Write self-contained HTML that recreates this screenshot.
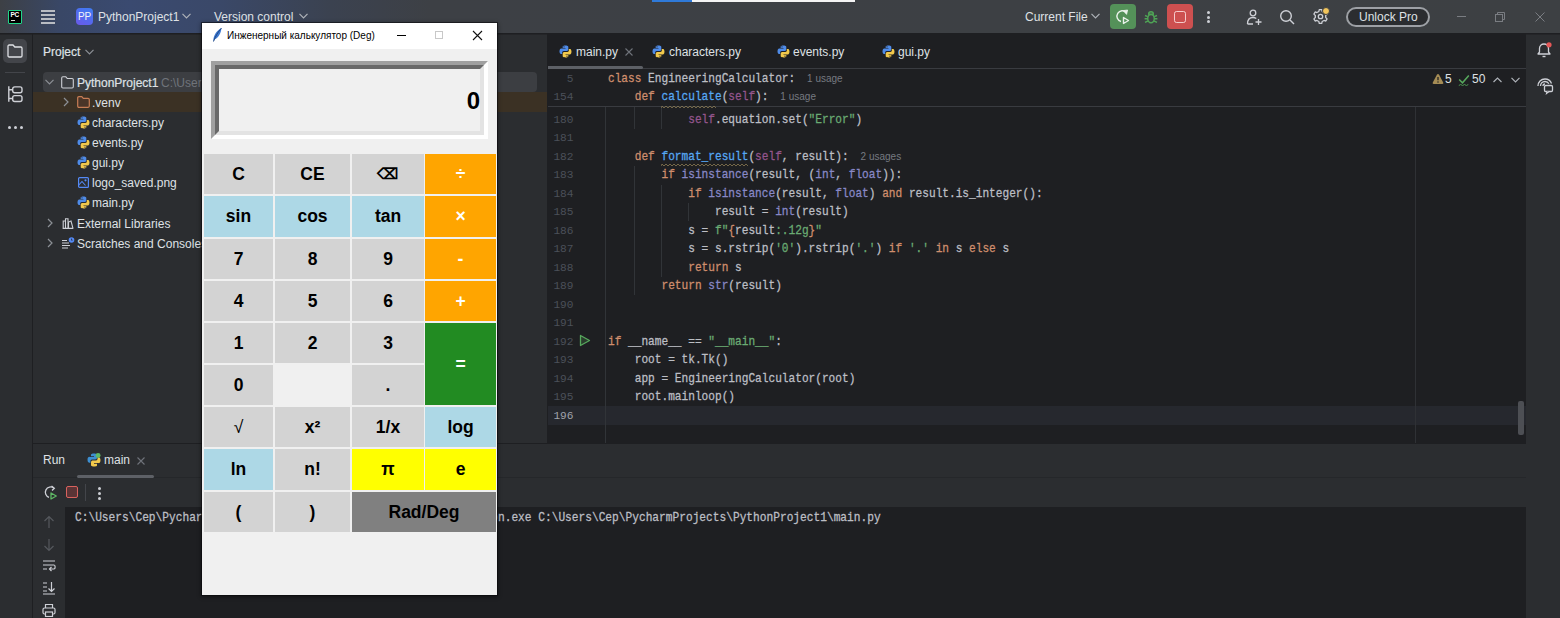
<!DOCTYPE html>
<html><head><meta charset="utf-8">
<style>
*{margin:0;padding:0;box-sizing:border-box}
html,body{width:1560px;height:618px;overflow:hidden;background:#1E1F22;font-family:"Liberation Sans",sans-serif;position:relative}
.a{position:absolute}
.t{position:absolute;white-space:nowrap;font-size:12px;line-height:14px}
.mono{font-family:"Liberation Mono",monospace}
/* title bar */
#top{left:0;top:0;width:1560px;height:33px;background:linear-gradient(90deg,#3d4045 0px,#394766 60px,#3a4a70 130px,#3a4868 220px,#3b4250 330px,#3d4045 430px,#3d4043 1560px)}
#topline{left:0;top:33px;width:1560px;height:1px;background:#1e1f22}
#lstrip{left:0;top:34px;width:32px;height:584px;background:#2B2D30;border-top:1px solid #242528}
#lstripb{left:32px;top:34px;width:1px;height:584px;background:#1E1F22}
#proj{left:33px;top:34px;width:514px;height:409px;background:#2B2D30;border-top:1px solid #242528}
#projb{left:547px;top:34px;width:1px;height:409px;background:#1E1F22}
#edtabs{left:548px;top:34px;width:978px;height:34px;background:#1E1F22}
#edtabb{left:548px;top:68px;width:978px;height:1px;background:#2B2D30}
#editor{left:548px;top:69px;width:978px;height:374px;background:#1E1F22}
#rstrip{left:1526px;top:34px;width:34px;height:584px;background:#2B2D30;border-top:1px solid #242528}
#rstripb{display:none}
#botb{left:33px;top:443px;width:1493px;height:1px;background:#1E1F22}
#runhdr{left:33px;top:444px;width:1493px;height:63px;background:#2B2D30}
#console{left:65px;top:507px;width:1461px;height:111px;background:#1E1F22}
.code{position:absolute;left:608px;font-family:"Liberation Mono",monospace;font-size:11.15px;line-height:18.5px;height:18.5px;color:#BCBEC4;white-space:pre;-webkit-text-stroke:0.25px currentColor;transform:scaleY(1.12);transform-origin:0 55%}
.code .hint{-webkit-text-stroke:0}
.ln{position:absolute;left:548px;width:25.5px;text-align:right;font-family:"Liberation Mono",monospace;font-size:11.15px;line-height:18.5px;color:#4B5059;white-space:pre}
.k{color:#CF8E6D}.f{color:#56A8F5}.s{color:#94558D}.g{color:#6AAB73}.b{color:#8888C6}
.btn{position:absolute;text-align:center;font-family:"Liberation Sans",sans-serif;font-weight:bold;font-size:17.5px;white-space:nowrap}
.hint{font-family:"Liberation Sans",sans-serif;font-size:10px;color:#767A81;margin-left:-1.5px}
</style></head>
<body>
<div id="top" class="a"></div>
<div id="lstrip" class="a"></div>
<div id="lstripb" class="a"></div>
<div id="proj" class="a"></div>
<div id="projb" class="a"></div>
<div id="edtabs" class="a"></div>
<div id="edtabb" class="a"></div>
<div id="editor" class="a"></div>
<div id="rstrip" class="a"></div>
<div id="rstripb" class="a"></div>
<div id="botb" class="a"></div>
<div id="runhdr" class="a"></div>
<div id="console" class="a"></div>
<div id="topline" class="a"></div>



<!-- LEFT STRIP -->
<div class="a" style="left:3px;top:39px;width:24px;height:24px;border-radius:5px;background:#43454A"></div>
<svg class="a" style="left:7px;top:44px" width="16" height="14" viewBox="0 0 16 14"><path d="M1 2.2 C1 1.5 1.5 1 2.2 1 H6 L7.8 3 H13.8 C14.5 3 15 3.5 15 4.2 V11.8 C15 12.5 14.5 13 13.8 13 H2.2 C1.5 13 1 12.5 1 11.8 Z" fill="none" stroke="#DFE1E5" stroke-width="1.3"/></svg>
<div class="a" style="left:5px;top:72px;width:20px;height:1px;background:#43454A"></div>
<svg class="a" style="left:7px;top:85px" width="17" height="18" viewBox="0 0 17 18"><path d="M1.8 1.3 V16.8 M1.8 4.8 H5.2 M1.8 13.5 H5.2" fill="none" stroke="#CED0D6" stroke-width="1.4"/><rect x="5.7" y="1.9" width="9.3" height="5.9" rx="2" fill="none" stroke="#CED0D6" stroke-width="1.4"/><rect x="5.7" y="10.6" width="9.3" height="5.9" rx="2" fill="none" stroke="#CED0D6" stroke-width="1.4"/></svg>
<div class="a" style="left:8px;top:126px;width:3px;height:3px;border-radius:50%;background:#CED0D6"></div>
<div class="a" style="left:14px;top:126px;width:3px;height:3px;border-radius:50%;background:#CED0D6"></div>
<div class="a" style="left:20px;top:126px;width:3px;height:3px;border-radius:50%;background:#CED0D6"></div>

<!-- PROJECT PANEL -->
<div class="t" style="left:43px;top:45px;color:#DFE1E5;-webkit-text-stroke:0.2px #DFE1E5">Project</div>
<svg class="a" style="left:85px;top:49px" width="9" height="6"><path d="M0.5 0.8 L4.5 4.8 L8.5 0.8" fill="none" stroke="#8C9096" stroke-width="1.2"/></svg>
<div class="a" style="left:43px;top:72px;width:494px;height:20px;border-radius:4px;background:#3C3E42"></div>
<div class="a" style="left:33px;top:92px;width:514px;height:20px;background:#3B3124"></div>
<svg class="a" style="left:45px;top:79px" width="9" height="6"><path d="M0.5 0.8 L4.5 4.8 L8.5 0.8" fill="none" stroke="#8C9096" stroke-width="1.2"/></svg>
<svg class="a" style="left:61px;top:76px" width="13" height="13" viewBox="0 0 13 13"><path d="M0.7 2 C0.7 1.3 1.2 0.8 1.9 0.8 H4.8 L6.3 2.5 H11.1 C11.8 2.5 12.3 3 12.3 3.7 V10.8 C12.3 11.5 11.8 12 11.1 12 H1.9 C1.2 12 0.7 11.5 0.7 10.8 Z" fill="none" stroke="#CED0D6" stroke-width="1.1"/></svg>
<div class="t" style="left:77px;top:76px;color:#DFE1E5;-webkit-text-stroke:0.2px #DFE1E5">PythonProject1</div>
<div class="t" style="left:161px;top:76px;color:#6F737A">C:\Users\Cep\PycharmProjects\PythonProject1</div>
<svg class="a" style="left:63px;top:97px" width="6" height="10" viewBox="0 0 6 10"><path d="M1 1 L5 5 L1 9" fill="none" stroke="#8C9096" stroke-width="1.2"/></svg>
<svg class="a" style="left:77px;top:96px" width="13" height="12" viewBox="0 0 13 12"><path d="M0.7 1.9 C0.7 1.2 1.2 0.7 1.9 0.7 H4.8 L6.3 2.3 H11.1 C11.8 2.3 12.3 2.8 12.3 3.5 V10.1 C12.3 10.8 11.8 11.3 11.1 11.3 H1.9 C1.2 11.3 0.7 10.8 0.7 10.1 Z" fill="#4A3528" stroke="#C77D55" stroke-width="1.2"/></svg>
<div class="t" style="left:92px;top:96px;color:#DFE1E5">.venv</div>
<svg class="a" style="left:77px;top:116px" width="13" height="13" viewBox="0 0 13 13"><path d="M6.3 0.5 C3.6 0.5 3.7 1.7 3.7 1.7 V3 H6.5 V3.6 H2.4 C2.4 3.6 0.5 3.4 0.5 6.3 C0.5 9.1 2.1 9 2.1 9 H3.2 V7.6 C3.2 7.6 3.1 6 4.8 6 H7.7 C7.7 6 9.3 6 9.3 4.5 V1.9 C9.3 1.9 9.5 0.5 6.3 0.5 Z" fill="#4F8BE8"/><path d="M6.7 12.5 C9.4 12.5 9.3 11.3 9.3 11.3 V10 H6.5 V9.4 H10.6 C10.6 9.4 12.5 9.6 12.5 6.7 C12.5 3.9 10.9 4 10.9 4 H9.8 V5.4 C9.8 5.4 9.9 7 8.2 7 H5.3 C5.3 7 3.7 7 3.7 8.5 V11.1 C3.7 11.1 3.5 12.5 6.7 12.5 Z" fill="#F2C94C"/><circle cx="5" cy="1.8" r="0.6" fill="#2B2D30"/><circle cx="8" cy="11.2" r="0.6" fill="#2B2D30"/></svg>
<div class="t" style="left:92px;top:116px;color:#DFE1E5">characters.py</div>
<svg class="a" style="left:77px;top:136px" width="13" height="13" viewBox="0 0 13 13"><path d="M6.3 0.5 C3.6 0.5 3.7 1.7 3.7 1.7 V3 H6.5 V3.6 H2.4 C2.4 3.6 0.5 3.4 0.5 6.3 C0.5 9.1 2.1 9 2.1 9 H3.2 V7.6 C3.2 7.6 3.1 6 4.8 6 H7.7 C7.7 6 9.3 6 9.3 4.5 V1.9 C9.3 1.9 9.5 0.5 6.3 0.5 Z" fill="#4F8BE8"/><path d="M6.7 12.5 C9.4 12.5 9.3 11.3 9.3 11.3 V10 H6.5 V9.4 H10.6 C10.6 9.4 12.5 9.6 12.5 6.7 C12.5 3.9 10.9 4 10.9 4 H9.8 V5.4 C9.8 5.4 9.9 7 8.2 7 H5.3 C5.3 7 3.7 7 3.7 8.5 V11.1 C3.7 11.1 3.5 12.5 6.7 12.5 Z" fill="#F2C94C"/><circle cx="5" cy="1.8" r="0.6" fill="#2B2D30"/><circle cx="8" cy="11.2" r="0.6" fill="#2B2D30"/></svg>
<div class="t" style="left:92px;top:136px;color:#DFE1E5">events.py</div>
<svg class="a" style="left:77px;top:156px" width="13" height="13" viewBox="0 0 13 13"><path d="M6.3 0.5 C3.6 0.5 3.7 1.7 3.7 1.7 V3 H6.5 V3.6 H2.4 C2.4 3.6 0.5 3.4 0.5 6.3 C0.5 9.1 2.1 9 2.1 9 H3.2 V7.6 C3.2 7.6 3.1 6 4.8 6 H7.7 C7.7 6 9.3 6 9.3 4.5 V1.9 C9.3 1.9 9.5 0.5 6.3 0.5 Z" fill="#4F8BE8"/><path d="M6.7 12.5 C9.4 12.5 9.3 11.3 9.3 11.3 V10 H6.5 V9.4 H10.6 C10.6 9.4 12.5 9.6 12.5 6.7 C12.5 3.9 10.9 4 10.9 4 H9.8 V5.4 C9.8 5.4 9.9 7 8.2 7 H5.3 C5.3 7 3.7 7 3.7 8.5 V11.1 C3.7 11.1 3.5 12.5 6.7 12.5 Z" fill="#F2C94C"/><circle cx="5" cy="1.8" r="0.6" fill="#2B2D30"/><circle cx="8" cy="11.2" r="0.6" fill="#2B2D30"/></svg>
<div class="t" style="left:92px;top:156px;color:#DFE1E5">gui.py</div>
<svg class="a" style="left:78px;top:177px" width="11" height="11" viewBox="0 0 11 11"><rect x="0.6" y="0.6" width="9.8" height="9.8" rx="1" fill="none" stroke="#548AF7" stroke-width="1.2"/><path d="M0.8 8 L4 4.5 L7.5 8.5" fill="none" stroke="#548AF7" stroke-width="1.1"/><circle cx="7.5" cy="3.3" r="1.1" fill="#548AF7"/></svg>
<div class="t" style="left:92px;top:176px;color:#DFE1E5">logo_saved.png</div>
<svg class="a" style="left:77px;top:196px" width="13" height="13" viewBox="0 0 13 13"><path d="M6.3 0.5 C3.6 0.5 3.7 1.7 3.7 1.7 V3 H6.5 V3.6 H2.4 C2.4 3.6 0.5 3.4 0.5 6.3 C0.5 9.1 2.1 9 2.1 9 H3.2 V7.6 C3.2 7.6 3.1 6 4.8 6 H7.7 C7.7 6 9.3 6 9.3 4.5 V1.9 C9.3 1.9 9.5 0.5 6.3 0.5 Z" fill="#4F8BE8"/><path d="M6.7 12.5 C9.4 12.5 9.3 11.3 9.3 11.3 V10 H6.5 V9.4 H10.6 C10.6 9.4 12.5 9.6 12.5 6.7 C12.5 3.9 10.9 4 10.9 4 H9.8 V5.4 C9.8 5.4 9.9 7 8.2 7 H5.3 C5.3 7 3.7 7 3.7 8.5 V11.1 C3.7 11.1 3.5 12.5 6.7 12.5 Z" fill="#F2C94C"/><circle cx="5" cy="1.8" r="0.6" fill="#2B2D30"/><circle cx="8" cy="11.2" r="0.6" fill="#2B2D30"/></svg>
<div class="t" style="left:92px;top:196px;color:#DFE1E5">main.py</div>
<svg class="a" style="left:47px;top:218px" width="6" height="10" viewBox="0 0 6 10"><path d="M1 1 L5 5 L1 9" fill="none" stroke="#8C9096" stroke-width="1.2"/></svg>
<svg class="a" style="left:62px;top:218px" width="12" height="11" viewBox="0 0 12 11"><path d="M0.6 10.4 H11.4 M1.2 10.4 V3 H3.5 V10.4 M3.5 10.4 V0.8 H6 V10.4 M6.5 10.4 V4 L9 3 L11 10.4" fill="none" stroke="#CED0D6" stroke-width="1.1"/></svg>
<div class="t" style="left:77px;top:217px;color:#DFE1E5">External Libraries</div>
<svg class="a" style="left:47px;top:238px" width="6" height="10" viewBox="0 0 6 10"><path d="M1 1 L5 5 L1 9" fill="none" stroke="#8C9096" stroke-width="1.2"/></svg>
<svg class="a" style="left:61px;top:237px" width="14" height="12" viewBox="0 0 14 12"><path d="M1 3.5 H6 M1 6 H8 M1 8.5 H9 M1 11 H7" stroke="#CED0D6" stroke-width="1.1"/><circle cx="10.5" cy="3" r="2.8" fill="#548AF7"/><path d="M10.5 1.6 V3.2 H11.6" stroke="#2B2D30" stroke-width="0.8" fill="none"/></svg>
<div class="t" style="left:77px;top:237px;color:#DFE1E5">Scratches and Consoles</div>

<!-- RUN PANEL -->
<div class="a" style="left:33px;top:507px;width:32px;height:111px;background:#2B2D30"></div>
<div class="t" style="left:43px;top:453px;color:#DFE1E5">Run</div>
<svg class="a" style="left:87px;top:453px" width="14" height="14" viewBox="0 0 13 13"><path d="M6.3 0.5 C3.6 0.5 3.7 1.7 3.7 1.7 V3 H6.5 V3.6 H2.4 C2.4 3.6 0.5 3.4 0.5 6.3 C0.5 9.1 2.1 9 2.1 9 H3.2 V7.6 C3.2 7.6 3.1 6 4.8 6 H7.7 C7.7 6 9.3 6 9.3 4.5 V1.9 C9.3 1.9 9.5 0.5 6.3 0.5 Z" fill="#3D8FD1"/><path d="M6.7 12.5 C9.4 12.5 9.3 11.3 9.3 11.3 V10 H6.5 V9.4 H10.6 C10.6 9.4 12.5 9.6 12.5 6.7 C12.5 3.9 10.9 4 10.9 4 H9.8 V5.4 C9.8 5.4 9.9 7 8.2 7 H5.3 C5.3 7 3.7 7 3.7 8.5 V11.1 C3.7 11.1 3.5 12.5 6.7 12.5 Z" fill="#F2C94C"/><circle cx="10.3" cy="2.4" r="2.3" fill="#5FB865"/></svg>
<div class="t" style="left:104px;top:453px;color:#DFE1E5">main</div>
<svg class="a" style="left:137px;top:457px" width="8" height="8" viewBox="0 0 8 8"><path d="M0.5 0.5 L7.5 7.5 M7.5 0.5 L0.5 7.5" stroke="#6F737A" stroke-width="1.1"/></svg>
<div class="a" style="left:33px;top:477px;width:1493px;height:1px;background:#25272A"></div>
<div class="a" style="left:77px;top:475px;width:77px;height:3px;border-radius:2px;background:#5D6066"></div>
<svg class="a" style="left:43px;top:485px" width="15" height="15" viewBox="0 0 15 15"><path d="M10.8 3 A5.3 5.3 0 1 0 6 12.3" fill="none" stroke="#CED0D6" stroke-width="1.3"/><path d="M8.5 1 L11.3 3.2 L9 5.5" fill="none" stroke="#CED0D6" stroke-width="1.3"/><path d="M8 8 L13.3 11 L8 14 Z" fill="none" stroke="#5FB865" stroke-width="1.3" stroke-linejoin="round"/></svg>
<div class="a" style="left:66px;top:486px;width:12px;height:12px;border-radius:2px;border:1.3px solid #D9625E;background:#5A3436"></div>
<div class="a" style="left:85px;top:484px;width:1px;height:17px;background:#43454A"></div>
<div class="a" style="left:98px;top:486.5px;width:3px;height:3px;border-radius:50%;background:#CED0D6"></div>
<div class="a" style="left:98px;top:491.5px;width:3px;height:3px;border-radius:50%;background:#CED0D6"></div>
<div class="a" style="left:98px;top:496.5px;width:3px;height:3px;border-radius:50%;background:#CED0D6"></div>
<div class="a mono" style="left:75px;top:509px;font-size:11.2px;line-height:18px;color:#BCBEC4;white-space:pre;-webkit-text-stroke:0.25px #BCBEC4;transform:scaleY(1.1);transform-origin:0 55%">C:\Users\Cep\PycharmProjects\PythonProject1\.venv\Scripts\python.exe C:\Users\Cep\PycharmProjects\PythonProject1\main.py</div>
<svg class="a" style="left:43px;top:515px" width="12" height="14" viewBox="0 0 12 14"><path d="M6 13 V1.5 M1.5 6 L6 1.5 L10.5 6" fill="none" stroke="#55585D" stroke-width="1.2"/></svg>
<svg class="a" style="left:43px;top:538px" width="12" height="14" viewBox="0 0 12 14"><path d="M6 1 V12.5 M1.5 8 L6 12.5 L10.5 8" fill="none" stroke="#55585D" stroke-width="1.2"/></svg>
<svg class="a" style="left:42px;top:559px" width="14" height="14" viewBox="0 0 14 14"><path d="M1 2 H13 M1 6 H12 C13.5 6 13.5 10 12 10 H8 M1 10 H5" fill="none" stroke="#CED0D6" stroke-width="1.2"/><path d="M9.5 8 L7.5 10 L9.5 12" fill="none" stroke="#CED0D6" stroke-width="1.2"/></svg>
<svg class="a" style="left:42px;top:581px" width="14" height="14" viewBox="0 0 14 14"><path d="M1 2 H5 M1 6 H5 M1 10 H5 M1 13 H13 M9.5 1 V10.5 M6.5 7.5 L9.5 10.5 L12.5 7.5" fill="none" stroke="#CED0D6" stroke-width="1.2"/></svg>
<svg class="a" style="left:42px;top:603px" width="14" height="14" viewBox="0 0 14 14"><path d="M3.5 5 V1.5 H10.5 V5" fill="none" stroke="#CED0D6" stroke-width="1.2"/><rect x="1" y="5" width="12" height="6" rx="1.5" fill="none" stroke="#CED0D6" stroke-width="1.2"/><rect x="3.5" y="9" width="7" height="4.5" fill="#2B2D30" stroke="#CED0D6" stroke-width="1.2"/></svg>
<!-- EDITOR -->
<svg class="a" style="left:559px;top:45px" width="13" height="13" viewBox="0 0 13 13"><path d="M6.3 0.5 C3.6 0.5 3.7 1.7 3.7 1.7 V3 H6.5 V3.6 H2.4 C2.4 3.6 0.5 3.4 0.5 6.3 C0.5 9.1 2.1 9 2.1 9 H3.2 V7.6 C3.2 7.6 3.1 6 4.8 6 H7.7 C7.7 6 9.3 6 9.3 4.5 V1.9 C9.3 1.9 9.5 0.5 6.3 0.5 Z" fill="#4F8BE8"/><path d="M6.7 12.5 C9.4 12.5 9.3 11.3 9.3 11.3 V10 H6.5 V9.4 H10.6 C10.6 9.4 12.5 9.6 12.5 6.7 C12.5 3.9 10.9 4 10.9 4 H9.8 V5.4 C9.8 5.4 9.9 7 8.2 7 H5.3 C5.3 7 3.7 7 3.7 8.5 V11.1 C3.7 11.1 3.5 12.5 6.7 12.5 Z" fill="#F2C94C"/><circle cx="5" cy="1.8" r="0.6" fill="#1E1F22"/><circle cx="8" cy="11.2" r="0.6" fill="#1E1F22"/></svg>
<div class="t" style="left:576px;top:45px;color:#DFE1E5">main.py</div>
<svg class="a" style="left:625px;top:48px" width="8" height="8" viewBox="0 0 8 8"><path d="M0.5 0.5 L7.5 7.5 M7.5 0.5 L0.5 7.5" stroke="#6F737A" stroke-width="1.1"/></svg>
<svg class="a" style="left:652px;top:45px" width="13" height="13" viewBox="0 0 13 13"><path d="M6.3 0.5 C3.6 0.5 3.7 1.7 3.7 1.7 V3 H6.5 V3.6 H2.4 C2.4 3.6 0.5 3.4 0.5 6.3 C0.5 9.1 2.1 9 2.1 9 H3.2 V7.6 C3.2 7.6 3.1 6 4.8 6 H7.7 C7.7 6 9.3 6 9.3 4.5 V1.9 C9.3 1.9 9.5 0.5 6.3 0.5 Z" fill="#4F8BE8"/><path d="M6.7 12.5 C9.4 12.5 9.3 11.3 9.3 11.3 V10 H6.5 V9.4 H10.6 C10.6 9.4 12.5 9.6 12.5 6.7 C12.5 3.9 10.9 4 10.9 4 H9.8 V5.4 C9.8 5.4 9.9 7 8.2 7 H5.3 C5.3 7 3.7 7 3.7 8.5 V11.1 C3.7 11.1 3.5 12.5 6.7 12.5 Z" fill="#F2C94C"/><circle cx="5" cy="1.8" r="0.6" fill="#1E1F22"/><circle cx="8" cy="11.2" r="0.6" fill="#1E1F22"/></svg>
<div class="t" style="left:669px;top:45px;color:#DFE1E5">characters.py</div>
<svg class="a" style="left:777px;top:45px" width="13" height="13" viewBox="0 0 13 13"><path d="M6.3 0.5 C3.6 0.5 3.7 1.7 3.7 1.7 V3 H6.5 V3.6 H2.4 C2.4 3.6 0.5 3.4 0.5 6.3 C0.5 9.1 2.1 9 2.1 9 H3.2 V7.6 C3.2 7.6 3.1 6 4.8 6 H7.7 C7.7 6 9.3 6 9.3 4.5 V1.9 C9.3 1.9 9.5 0.5 6.3 0.5 Z" fill="#4F8BE8"/><path d="M6.7 12.5 C9.4 12.5 9.3 11.3 9.3 11.3 V10 H6.5 V9.4 H10.6 C10.6 9.4 12.5 9.6 12.5 6.7 C12.5 3.9 10.9 4 10.9 4 H9.8 V5.4 C9.8 5.4 9.9 7 8.2 7 H5.3 C5.3 7 3.7 7 3.7 8.5 V11.1 C3.7 11.1 3.5 12.5 6.7 12.5 Z" fill="#F2C94C"/><circle cx="5" cy="1.8" r="0.6" fill="#1E1F22"/><circle cx="8" cy="11.2" r="0.6" fill="#1E1F22"/></svg>
<div class="t" style="left:793px;top:45px;color:#DFE1E5">events.py</div>
<svg class="a" style="left:882px;top:45px" width="13" height="13" viewBox="0 0 13 13"><path d="M6.3 0.5 C3.6 0.5 3.7 1.7 3.7 1.7 V3 H6.5 V3.6 H2.4 C2.4 3.6 0.5 3.4 0.5 6.3 C0.5 9.1 2.1 9 2.1 9 H3.2 V7.6 C3.2 7.6 3.1 6 4.8 6 H7.7 C7.7 6 9.3 6 9.3 4.5 V1.9 C9.3 1.9 9.5 0.5 6.3 0.5 Z" fill="#4F8BE8"/><path d="M6.7 12.5 C9.4 12.5 9.3 11.3 9.3 11.3 V10 H6.5 V9.4 H10.6 C10.6 9.4 12.5 9.6 12.5 6.7 C12.5 3.9 10.9 4 10.9 4 H9.8 V5.4 C9.8 5.4 9.9 7 8.2 7 H5.3 C5.3 7 3.7 7 3.7 8.5 V11.1 C3.7 11.1 3.5 12.5 6.7 12.5 Z" fill="#F2C94C"/><circle cx="5" cy="1.8" r="0.6" fill="#1E1F22"/><circle cx="8" cy="11.2" r="0.6" fill="#1E1F22"/></svg>
<div class="t" style="left:898px;top:45px;color:#DFE1E5">gui.py</div>
<div class="a" style="left:548px;top:68px;width:978px;height:1px;background:#393B40"></div>
<div class="a" style="left:548px;top:66px;width:95px;height:3px;border-radius:0 2px 2px 0;background:#5D6066"></div>
<div class="a" style="left:548px;top:406px;width:978px;height:18.5px;background:#26282E"></div>
<div class="a" style="left:605px;top:106px;width:1px;height:337px;background:#313438"></div>
<div class="a" style="left:634px;top:106px;width:1px;height:23px;background:#313438"></div>
<div class="a" style="left:661px;top:106px;width:1px;height:23px;background:#313438"></div>
<div class="a" style="left:634px;top:166px;width:1px;height:129px;background:#313438"></div>
<div class="a" style="left:661px;top:185px;width:1px;height:92px;background:#313438"></div>
<div class="a" style="left:688px;top:203px;width:1px;height:18px;background:#313438"></div>
<div class="a" style="left:1415px;top:106px;width:1px;height:337px;background:#2F3135"></div>
<div class="a" style="left:548px;top:69px;width:978px;height:37px;background:#1E1F22"></div>
<div class="a" style="left:548px;top:106px;width:978px;height:1px;background:#393B40"></div>
<div class="ln" style="top:69.5px">5</div>
<div class="code" style="top:69.5px"><span class="k">class</span> EngineeringCalculator:  <span class="hint">1 usage</span></div>
<div class="ln" style="top:88px">154</div>
<div class="code" style="top:88px">    <span class="k">def</span> <span class="f">calculate</span>(<span class="s">self</span>):  <span class="hint">1 usage</span></div>
<div class="ln" style="top:111.0px;color:#4B5059">180</div>
<div class="code" style="top:111.0px">            <span class="s">self</span>.equation.set(<span class="g">"Error"</span>)</div>
<div class="ln" style="top:129.47px;color:#4B5059">181</div>
<div class="ln" style="top:147.94px;color:#4B5059">182</div>
<div class="code" style="top:147.94px">    <span class="k">def</span> <span class="f">format_result</span>(<span class="s">self</span>, result):  <span class="hint">2 usages</span></div>
<div class="ln" style="top:166.41px;color:#4B5059">183</div>
<div class="code" style="top:166.41px">        <span class="k">if</span> <span class="b">isinstance</span>(result, (<span class="b">int</span>, <span class="b">float</span>)):</div>
<div class="ln" style="top:184.88px;color:#4B5059">184</div>
<div class="code" style="top:184.88px">            <span class="k">if</span> <span class="b">isinstance</span>(result, <span class="b">float</span>) <span class="k">and</span> result.is_integer():</div>
<div class="ln" style="top:203.35px;color:#4B5059">185</div>
<div class="code" style="top:203.35px">                result = <span class="b">int</span>(result)</div>
<div class="ln" style="top:221.82px;color:#4B5059">186</div>
<div class="code" style="top:221.82px">            s = <span class="g">f"</span><span class="k">{</span>result<span class="g">:.12g</span><span class="k">}</span><span class="g">"</span></div>
<div class="ln" style="top:240.29px;color:#4B5059">187</div>
<div class="code" style="top:240.29px">            s = s.rstrip(<span class="g">'0'</span>).rstrip(<span class="g">'.'</span>) <span class="k">if</span> <span class="g">'.'</span> <span class="k">in</span> s <span class="k">else</span> s</div>
<div class="ln" style="top:258.76px;color:#4B5059">188</div>
<div class="code" style="top:258.76px">            <span class="k">return</span> s</div>
<div class="ln" style="top:277.23px;color:#4B5059">189</div>
<div class="code" style="top:277.23px">        <span class="k">return</span> <span class="b">str</span>(result)</div>
<div class="ln" style="top:295.7px;color:#4B5059">190</div>
<div class="ln" style="top:314.17px;color:#4B5059">191</div>
<div class="ln" style="top:332.64px;color:#4B5059">192</div>
<div class="code" style="top:332.64px"><span class="k">if</span> __name__ == <span class="g">"__main__"</span>:</div>
<div class="ln" style="top:351.11px;color:#4B5059">193</div>
<div class="code" style="top:351.11px">    root = tk.Tk()</div>
<div class="ln" style="top:369.58px;color:#4B5059">194</div>
<div class="code" style="top:369.58px">    app = EngineeringCalculator(root)</div>
<div class="ln" style="top:388.05px;color:#4B5059">195</div>
<div class="code" style="top:388.05px">    root.mainloop()</div>
<div class="ln" style="top:406.52px;color:#A1A3AB">196</div>
<svg class="a" style="left:661px;top:105px" width="56" height="4"><path d="M0 3 L1 1 L3 3 L5 1 L7 3 L9 1 L11 3 L13 1 L15 3 L17 1 L19 3 L21 1 L23 3 L25 1 L27 3 L29 1 L31 3 L33 1 L35 3 L37 1 L39 3 L41 1 L43 3 L45 1 L47 3 L49 1 L51 3 L53 1 L55 3" fill="none" stroke="#8A7A52" stroke-width="0.8"/></svg>
<svg class="a" style="left:661px;top:162.5px" width="88" height="4"><path d="M0 3 L1 1 L3 3 L5 1 L7 3 L9 1 L11 3 L13 1 L15 3 L17 1 L19 3 L21 1 L23 3 L25 1 L27 3 L29 1 L31 3 L33 1 L35 3 L37 1 L39 3 L41 1 L43 3 L45 1 L47 3 L49 1 L51 3 L53 1 L55 3 L57 1 L59 3 L61 1 L63 3 L65 1 L67 3 L69 1 L71 3 L73 1 L75 3 L77 1 L79 3 L81 1 L83 3 L85 1 L87 3" fill="none" stroke="#8A7A52" stroke-width="0.8"/></svg>
<svg class="a" style="left:579px;top:334px" width="12" height="13" viewBox="0 0 12 13"><path d="M1.5 1.5 L10.5 6.5 L1.5 11.5 Z" fill="#2A3D2D" stroke="#57A85D" stroke-width="1.3" stroke-linejoin="round"/></svg>
<svg class="a" style="left:1432px;top:73px" width="12" height="12" viewBox="0 0 12 12"><path d="M6 1 C6.5 1 6.8 1.3 7.1 1.8 L11.2 9.6 C11.6 10.4 11.2 11 10.4 11 H1.6 C0.8 11 0.4 10.4 0.8 9.6 L4.9 1.8 C5.2 1.3 5.5 1 6 1 Z" fill="#A58C55"/><path d="M6 4 V7.3" stroke="#1E1F22" stroke-width="1.3"/><circle cx="6" cy="9.1" r="0.75" fill="#1E1F22"/></svg>
<div class="t" style="left:1445px;top:72px;color:#DFE1E5">5</div>
<svg class="a" style="left:1458px;top:74px" width="12" height="13" viewBox="0 0 12 13"><path d="M1.2 5.5 L4.5 8.8 L10.8 1.5" fill="none" stroke="#57A85D" stroke-width="1.5"/><path d="M0.8 11.5 L2.7 10.5 L4.6 11.5 L6.5 10.5 L8.4 11.5 L10.3 10.5" fill="none" stroke="#4E9A55" stroke-width="1"/></svg>
<div class="t" style="left:1472px;top:72px;color:#DFE1E5">50</div>
<svg class="a" style="left:1493px;top:77px" width="9" height="6"><path d="M0.5 5 L4.5 1 L8.5 5" fill="none" stroke="#AEB2B8" stroke-width="1.2"/></svg>
<svg class="a" style="left:1511px;top:77px" width="9" height="6"><path d="M0.5 0.8 L4.5 4.8 L8.5 0.8" fill="none" stroke="#AEB2B8" stroke-width="1.2"/></svg>
<div class="a" style="left:1518px;top:401px;width:6px;height:34px;border-radius:2px;background:#4D4F54"></div>
<svg class="a" style="left:1535px;top:41px" width="18" height="18" viewBox="0 0 18 18"><path d="M3 13 H15 L13.5 11 V7.5 C13.5 4.8 11.5 3 9 3 C6.5 3 4.5 4.8 4.5 7.5 V11 Z" fill="none" stroke="#CED0D6" stroke-width="1.3" stroke-linejoin="round"/><path d="M7.5 15.5 H10.5" stroke="#CED0D6" stroke-width="1.4"/><circle cx="14" cy="3.8" r="2.6" fill="#E55757"/></svg>
<svg class="a" style="left:1536px;top:77px" width="18" height="18" viewBox="0 0 18 18"><path d="M2 9 C2 5 5 2 9 2 C12 2 14.5 3.8 15.5 6.5" fill="none" stroke="#CED0D6" stroke-width="1.3"/><path d="M4.5 9 C4.5 6.5 6.5 4.5 9 4.5 C10.8 4.5 12.2 5.5 12.9 6.8" fill="none" stroke="#CED0D6" stroke-width="1.3"/><path d="M7 9 C7 8 8 7 9 7" fill="none" stroke="#CED0D6" stroke-width="1.3"/><rect x="8.5" y="8.5" width="8" height="6" rx="1.2" fill="#2B2D30" stroke="#CED0D6" stroke-width="1.3"/><path d="M11 14.5 L10.5 16.5 L13 14.5" fill="#2B2D30" stroke="#CED0D6" stroke-width="1.1"/></svg>
<!-- TITLE BAR CONTENT -->
<div class="a" style="left:8px;top:10px;width:14px;height:14px;background:#000;border:1px solid #21D789;border-radius:1px"></div>
<div class="t" style="left:10.5px;top:11px;font-size:6.5px;line-height:7px;color:#fff;font-weight:bold;letter-spacing:-0.4px">PC</div>
<div class="a" style="left:10.5px;top:20px;width:4px;height:1px;background:#ddd"></div>
<div class="a" style="left:41px;top:10.3px;width:13.5px;height:1.4px;background:#B9BCC2"></div>
<div class="a" style="left:41px;top:14.3px;width:13.5px;height:1.4px;background:#B9BCC2"></div>
<div class="a" style="left:41px;top:18.3px;width:13.5px;height:1.4px;background:#B9BCC2"></div>
<div class="a" style="left:41px;top:22.3px;width:13.5px;height:1.4px;background:#B9BCC2"></div>
<div class="a" style="left:76px;top:8px;width:17px;height:17px;border-radius:4px;background:linear-gradient(30deg,#6C58E8,#4D6FF0 60%,#3E7EF2)"></div>
<div class="t" style="left:76px;top:10px;width:17px;text-align:center;font-size:10px;line-height:13px;letter-spacing:-0.2px;color:#F2F2F8">PP</div>
<div class="t" style="left:98px;top:10px;color:#DFE1E5">PythonProject1</div>
<svg class="a" style="left:182px;top:13px" width="9" height="6"><path d="M0.5 0.8 L4.5 4.8 L8.5 0.8" fill="none" stroke="#AEB2B8" stroke-width="1.2"/></svg>
<div class="t" style="left:214px;top:10px;color:#DFE1E5">Version control</div>
<svg class="a" style="left:299px;top:13px" width="9" height="6"><path d="M0.5 0.8 L4.5 4.8 L8.5 0.8" fill="none" stroke="#AEB2B8" stroke-width="1.2"/></svg>
<div class="a" style="left:652px;top:0px;width:40px;height:2px;background:#2F7AD9"></div>
<div class="a" style="left:692px;top:0px;width:163px;height:2px;background:#F4F4F4"></div>
<div class="t" style="left:1025px;top:10px;color:#DFE1E5">Current File</div>
<svg class="a" style="left:1091px;top:13px" width="9" height="6"><path d="M0.5 0.8 L4.5 4.8 L8.5 0.8" fill="none" stroke="#AEB2B8" stroke-width="1.2"/></svg>
<div class="a" style="left:1110px;top:4px;width:26px;height:25px;border-radius:4px;background:#549159"></div>
<svg class="a" style="left:1114px;top:8px" width="18" height="18" viewBox="0 0 18 18"><path d="M12.5 4.5 A5.5 5.5 0 1 0 7 13.5" fill="none" stroke="#E9F1EA" stroke-width="1.4"/><path d="M9.2 2.6 L13.6 2 L12.6 6.4 Z" fill="#E9F1EA" stroke="#E9F1EA" stroke-width="0.8" stroke-linejoin="round"/><path d="M9.5 9.5 L14.5 12.5 L9.5 15.5 Z" fill="none" stroke="#E9F1EA" stroke-width="1.4" stroke-linejoin="round"/></svg>
<svg class="a" style="left:1143px;top:9px" width="16" height="16" viewBox="0 0 16 16"><path d="M5.6 5.2 A2.4 2.4 0 0 1 10.4 5.2 Z" fill="none" stroke="#4FA356" stroke-width="1.4" stroke-linejoin="round"/><ellipse cx="8" cy="9.6" rx="3.3" ry="4.2" fill="none" stroke="#4FA356" stroke-width="1.5"/><path d="M2 6.5 L4.8 7.6 M14 6.5 L11.2 7.6 M1.6 9.8 H4.7 M14.4 9.8 H11.3 M2 13.3 L4.9 12 M14 13.3 L11.1 12" stroke="#4FA356" stroke-width="1.4"/></svg>
<div class="a" style="left:1167px;top:4px;width:26px;height:25px;border-radius:4px;background:#CD5050"></div>
<div class="a" style="left:1173.5px;top:10.5px;width:12.5px;height:12.5px;border-radius:2.5px;border:1.8px solid rgba(255,235,235,0.8)"></div>
<div class="a" style="left:1207px;top:11px;width:3px;height:3px;border-radius:50%;background:#CED0D6"></div>
<div class="a" style="left:1207px;top:15.5px;width:3px;height:3px;border-radius:50%;background:#CED0D6"></div>
<div class="a" style="left:1207px;top:20px;width:3px;height:3px;border-radius:50%;background:#CED0D6"></div>
<svg class="a" style="left:1246px;top:8px" width="18" height="18" viewBox="0 0 18 18"><circle cx="7" cy="5" r="2.8" fill="none" stroke="#CED0D6" stroke-width="1.3"/><path d="M1.5 16 C1.5 11.5 4 9.5 7 9.5 C8.5 9.5 9.5 10 10.3 10.6" fill="none" stroke="#CED0D6" stroke-width="1.3"/><path d="M1.5 16 H7 M12.5 11 V17 M9.5 14 H15.5" stroke="#CED0D6" stroke-width="1.3"/></svg>
<svg class="a" style="left:1279px;top:9px" width="17" height="17" viewBox="0 0 17 17"><circle cx="7" cy="7" r="5.3" fill="none" stroke="#CED0D6" stroke-width="1.4"/><path d="M11 11 L15 15" stroke="#CED0D6" stroke-width="1.5"/></svg>
<svg class="a" style="left:1312px;top:8px" width="17" height="17" viewBox="0 0 17 17"><path d="M6.86 3.46 L7.26 1.61 L9.74 1.61 L10.14 3.46 L12.05 4.56 L13.85 3.98 L15.09 6.13 L13.68 7.40 L13.68 9.60 L15.09 10.87 L13.85 13.02 L12.05 12.44 L10.14 13.54 L9.74 15.39 L7.26 15.39 L6.86 13.54 L4.95 12.44 L3.15 13.02 L1.91 10.87 L3.32 9.60 L3.32 7.40 L1.91 6.13 L3.15 3.98 L4.95 4.56 Z" fill="none" stroke="#CED0D6" stroke-width="1.3" stroke-linejoin="round"/><circle cx="8.5" cy="8.5" r="2.2" fill="none" stroke="#CED0D6" stroke-width="1.3"/></svg>
<div class="a" style="left:1322px;top:7px;width:8px;height:8px;border-radius:50%;background:#F2C55C;border:1px solid #3c3f43"></div>
<div class="a" style="left:1346px;top:7px;width:84px;height:20px;border-radius:10px;border:2px solid #9DA0A5;background:#2B2D30"></div>
<div class="t" style="left:1359px;top:10px;color:#DFE1E5">Unlock Pro</div>
<div class="a" style="left:1457px;top:16px;width:9px;height:1px;background:#7A7D82"></div>
<svg class="a" style="left:1495px;top:12px" width="11" height="10" viewBox="0 0 11 10"><rect x="0.5" y="2.5" width="7" height="7" fill="none" stroke="#7A7D82" stroke-width="1"/><path d="M2.5 2.5 V0.5 H9.5 V7.5 H7.5" fill="none" stroke="#7A7D82" stroke-width="1"/></svg>
<svg class="a" style="left:1535px;top:12px" width="10" height="10" viewBox="0 0 10 10"><path d="M0.5 0.5 L9.5 9.5 M9.5 0.5 L0.5 9.5" stroke="#7A7D82" stroke-width="1"/></svg>

<!-- CALC -->
<div class="a" style="left:202px;top:23px;width:295px;height:572px;box-shadow:0 0 0 1px rgba(10,10,12,0.55),0 1px 4px 1px rgba(0,0,0,0.45)"></div>
<div class="a" style="left:202px;top:23px;width:295px;height:572px;background:#F0F0F0"></div>
<div class="a" style="left:202px;top:23px;width:295px;height:26px;background:#FFFFFF"></div>
<svg class="a" style="left:211px;top:27px" width="12" height="16" viewBox="0 0 12 16"><path d="M2.5 14.5 C2 11 3.5 5 10.5 1 C10 6 7.5 11 3.5 12.5 Z" fill="#3C78D0"/><path d="M10.5 1 C7 5 4.5 9 2.5 14.5" fill="none" stroke="#1B3F7A" stroke-width="0.9"/></svg>
<div class="t" style="left:227px;top:29px;font-size:10px;line-height:13px;color:#000">Инженерный калькулятор (Deg)</div>
<div class="a" style="left:397px;top:35px;width:9px;height:1px;background:#000"></div>
<div class="a" style="left:435px;top:31px;width:8px;height:8px;border:1px solid #C8C8C8"></div>
<svg class="a" style="left:472px;top:30px" width="11" height="11" viewBox="0 0 11 11"><path d="M1 1 L10 10 M10 1 L1 10" stroke="#111" stroke-width="1.1"/></svg>
<div class="a" style="left:211px;top:61px;width:277px;height:78px;border-style:solid;border-width:4px;border-color:#A0A0A0 #FFFFFF #FFFFFF #A0A0A0"></div>
<div class="a" style="left:215px;top:65px;width:269px;height:70px;border-style:solid;border-width:4px;border-color:#696969 #E3E3E3 #E3E3E3 #696969;background:#F0F0F0"></div>
<div class="t" style="left:219px;top:86.5px;width:261px;text-align:right;font-size:24px;line-height:28px;font-weight:bold;color:#000">0</div>
<div class="btn" style="left:204px;top:154px;width:69px;height:40px;line-height:40px;background:#D3D3D3;color:#000">C</div>
<div class="btn" style="left:275px;top:154px;width:75px;height:40px;line-height:40px;background:#D3D3D3;color:#000">CE</div>
<div class="btn" style="left:352px;top:154px;width:72px;height:40px;line-height:40px;background:#D3D3D3;color:#000"><span style="font-size:15px;position:relative;top:-1px;left:-0.5px">⌫</span></div>
<div class="btn" style="left:425px;top:154px;width:71px;height:40px;line-height:40px;background:#FFA500;color:#fff">÷</div>
<div class="btn" style="left:204px;top:196px;width:69px;height:41px;line-height:41px;background:#ADD8E6;color:#000">sin</div>
<div class="btn" style="left:275px;top:196px;width:75px;height:41px;line-height:41px;background:#ADD8E6;color:#000">cos</div>
<div class="btn" style="left:352px;top:196px;width:72px;height:41px;line-height:41px;background:#ADD8E6;color:#000">tan</div>
<div class="btn" style="left:425px;top:196px;width:71px;height:41px;line-height:41px;background:#FFA500;color:#fff">×</div>
<div class="btn" style="left:204px;top:239px;width:69px;height:40px;line-height:40px;background:#D3D3D3;color:#000">7</div>
<div class="btn" style="left:275px;top:239px;width:75px;height:40px;line-height:40px;background:#D3D3D3;color:#000">8</div>
<div class="btn" style="left:352px;top:239px;width:72px;height:40px;line-height:40px;background:#D3D3D3;color:#000">9</div>
<div class="btn" style="left:425px;top:239px;width:71px;height:40px;line-height:40px;background:#FFA500;color:#fff">-</div>
<div class="btn" style="left:204px;top:281px;width:69px;height:40px;line-height:40px;background:#D3D3D3;color:#000">4</div>
<div class="btn" style="left:275px;top:281px;width:75px;height:40px;line-height:40px;background:#D3D3D3;color:#000">5</div>
<div class="btn" style="left:352px;top:281px;width:72px;height:40px;line-height:40px;background:#D3D3D3;color:#000">6</div>
<div class="btn" style="left:425px;top:281px;width:71px;height:40px;line-height:40px;background:#FFA500;color:#fff">+</div>
<div class="btn" style="left:204px;top:323px;width:69px;height:40px;line-height:40px;background:#D3D3D3;color:#000">1</div>
<div class="btn" style="left:275px;top:323px;width:75px;height:40px;line-height:40px;background:#D3D3D3;color:#000">2</div>
<div class="btn" style="left:352px;top:323px;width:72px;height:40px;line-height:40px;background:#D3D3D3;color:#000">3</div>
<div class="btn" style="left:425px;top:323px;width:71px;height:82px;line-height:82px;background:#228B22;color:#fff">=</div>
<div class="btn" style="left:204px;top:365px;width:69px;height:40px;line-height:40px;background:#D3D3D3;color:#000">0</div>
<div class="btn" style="left:352px;top:365px;width:72px;height:40px;line-height:40px;background:#D3D3D3;color:#000">.</div>
<div class="btn" style="left:204px;top:407px;width:69px;height:40px;line-height:40px;background:#D3D3D3;color:#000"><span style="font-weight:normal">√</span></div>
<div class="btn" style="left:275px;top:407px;width:75px;height:40px;line-height:40px;background:#D3D3D3;color:#000">x²</div>
<div class="btn" style="left:352px;top:407px;width:72px;height:40px;line-height:40px;background:#D3D3D3;color:#000">1/x</div>
<div class="btn" style="left:425px;top:407px;width:71px;height:40px;line-height:40px;background:#ADD8E6;color:#000">log</div>
<div class="btn" style="left:204px;top:449px;width:69px;height:41px;line-height:41px;background:#ADD8E6;color:#000">ln</div>
<div class="btn" style="left:275px;top:449px;width:75px;height:41px;line-height:41px;background:#D3D3D3;color:#000">n!</div>
<div class="btn" style="left:352px;top:449px;width:72px;height:41px;line-height:41px;background:#FFFF00;color:#000">π</div>
<div class="btn" style="left:425px;top:449px;width:71px;height:41px;line-height:41px;background:#FFFF00;color:#000">e</div>
<div class="btn" style="left:204px;top:492px;width:69px;height:40px;line-height:40px;background:#D3D3D3;color:#000">(</div>
<div class="btn" style="left:275px;top:492px;width:75px;height:40px;line-height:40px;background:#D3D3D3;color:#000">)</div>
<div class="btn" style="left:352px;top:492px;width:144px;height:40px;line-height:40px;background:#808080;color:#000">Rad/Deg</div>

</body></html>
